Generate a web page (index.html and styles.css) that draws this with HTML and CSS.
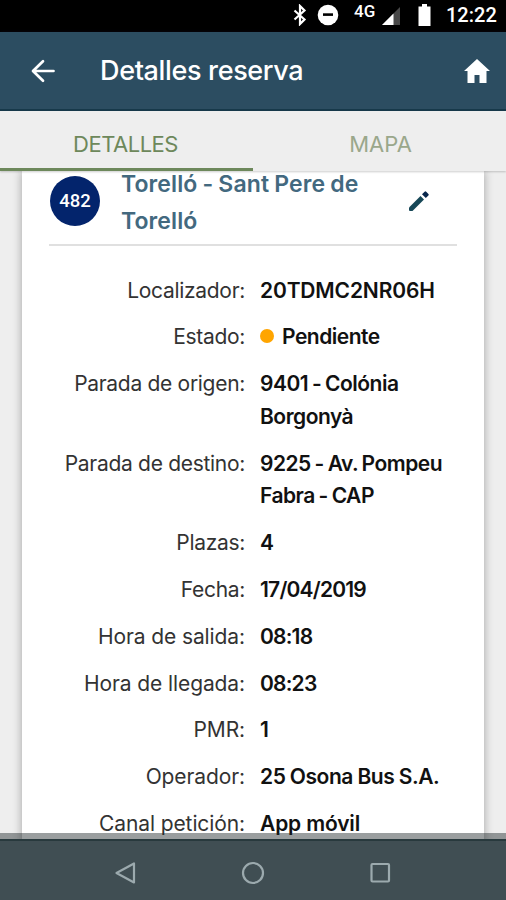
FILE: index.html
```html
<!DOCTYPE html>
<html lang="es">
<head>
<meta charset="utf-8">
<title>Detalles reserva</title>
<link rel="stylesheet" href="styles.css">
</head>
<body>
<div class="phone">
  <div class="status">
    <svg class="bt" width="14" height="22" viewBox="0 0 14 22" fill="none" stroke="#fff" stroke-width="2.200"><path d="M1.500 6.500 11.500 15.500 7 20V2l4.500 4.500L1.500 15.500"/></svg>
    <svg class="dnd" width="22" height="22" viewBox="0 0 22 22"><circle cx="11" cy="11" r="10.300" fill="#fff"/><path d="M6 10.600h10" stroke="#000" stroke-width="2.600"/></svg>
    <span class="net">4G</span>
    <svg class="sig" width="18" height="18" viewBox="0 0 18 18"><path d="M18 0v18H0z" fill="#484848"/><path d="M11.500 6.500V18H0z" fill="#fff"/></svg>
    <svg class="bat" width="13" height="22" viewBox="0 0 13 22"><path d="M4 0h5v2.500h3.500V22H.5V2.500H4z" fill="#fff"/></svg>
    <span class="clock">12:22</span>
  </div>
  <header class="bar">
    <svg class="back" width="24" height="24" viewBox="0 0 24 24" fill="none" stroke="#fff" stroke-width="2.700" stroke-linecap="round" stroke-linejoin="round"><path d="M12 2.200 2 12l10 9.800M2.500 12H22.500"/></svg>
    <h1>Detalles reserva</h1>
    <svg class="home" width="26" height="24" viewBox="0 0 26 24"><path d="M13 0 26 12h-3.500v12h-7v-8h-5v8h-7V12H0z" fill="#fff"/></svg>
  </header>
  <nav class="tabs"><span class="tab active">DETALLES</span><span class="tab">MAPA</span></nav>
  <main>
    <section class="card">
      <div class="route">
        <span class="line">482</span>
        <h2>Torelló - Sant Pere de<br>Torelló</h2>
        <svg class="edit" width="22" height="22" viewBox="0 0 22 22" fill="#164757"><path d="M1 17.500 12.500 6l3.500 3.500L4.500 21H2q-1 0-1-1z"/><path d="m14 4.300 2.600-2.600q.8-.8 1.600 0l2.200 2.200q.8.800 0 1.600L17.800 8z" fill="#08264c"/></svg>
      </div>
      <dl>
        <dt>Localizador:</dt><dd class="code">20TDMC2NR06H</dd>
        <dt>Estado:</dt><dd><i class="dot"></i>Pendiente</dd>
        <dt>Parada de origen:</dt><dd>9401 - Colónia<br>Borgonyà</dd>
        <dt>Parada de destino:</dt><dd>9225 - Av. Pompeu<br>Fabra - CAP</dd>
        <dt>Plazas:</dt><dd>4</dd>
        <dt>Fecha:</dt><dd class="num">17/04/2019</dd>
        <dt class="wide">Hora de salida:</dt><dd class="num">08:18</dd>
        <dt class="wide">Hora de llegada:</dt><dd class="num">08:23</dd>
        <dt class="wide">PMR:</dt><dd>1</dd>
        <dt class="wide">Operador:</dt><dd class="operator">25 Osona Bus S.A.</dd>
        <dt class="wide">Canal petición:</dt><dd class="code">App móvil</dd>
      </dl>
    </section>
  </main>
  <footer class="nav">
    <svg width="22" height="22" viewBox="0 0 22 22"><path d="M2.500 11 20 1.500v19z"/></svg>
    <svg width="24" height="24" viewBox="0 0 24 24"><circle cx="12" cy="12" r="10"/></svg>
    <svg width="22" height="22" viewBox="0 0 22 22"><rect x="2.500" y="2" width="17.500" height="17.500" rx="1"/></svg>
  </footer>
</div>
</body>
</html>
```
FILE: styles.css
```css
* { box-sizing: border-box; }
body { margin: 0; font-family: Inter, "Liberation Sans", sans-serif; }
.phone { width: 506px; height: 900px; display: flex; flex-direction: column; overflow: hidden; background: #eee; }
.status { height: 32px; flex: none; background: #000; color: #fff; display: flex; padding-left: 293px; align-items: flex-start; font-family: Roboto, sans-serif; }
.bt { margin-top: 4px; }
.dnd { margin: 4px 0 0 10px; }
.net { font-size: 17px; line-height: 20px; font-weight: 500; margin: 1px 0 0 15px; width: 22px; }
.sig { margin: 7px 0 0 6px; }
.bat { margin: 4px 0 0 18px; }
.clock { font-size: 20px; line-height: 24px; font-weight: 500; margin: 3px 0 0 15px; }
.bar { height: 79px; flex: none; background: #2c4d61; border-bottom: 2px solid #17394a; color: #fff; display: flex; align-items: center; padding: 0 16px 0 31px; z-index: 1; box-shadow: 0 1px 4px rgba(60, 40, 100, .3); }
.back { margin-top: 1px; }
.bar h1 { margin: 1px auto 0 45px; font-size: 27px; font-weight: 450; letter-spacing: -.35px; line-height: 40px; }
.home { margin-top: 1px; }
.tabs { height: 60px; flex: none; display: grid; grid-template-columns: 253px 253px; background: #eee; z-index: 1; color: #9aa78b; font-size: 22px; text-align: center; line-height: 66px; box-shadow: 0 1px 2px rgba(0, 0, 0, .2); }
.tab { height: 60px; padding-left: 2px; }
.tab.active { color: #6d885b; border-bottom: 3px solid #6d885b; padding: 0 2px 0 0; letter-spacing: -.5px; }
main { flex: 1; min-height: 0; overflow: hidden; padding: 0 22px; }
.card { background: #fff; height: 700px; padding: 0 27px; box-shadow: 0 0 9px rgba(0, 0, 0, .32); }
.route { height: 75px; border-bottom: 2px solid #e0e0e0; display: flex; }
.line { width: 50px; height: 50px; margin: 5px 0 0 1px; border-radius: 50%; background: #03246c; color: #fff; font: 500 18.500px/50px Roboto, sans-serif; text-align: center; }
.route h2 { margin: -5px 0 0 21px; width: 287px; font-size: 23px; line-height: 37px; font-weight: 600; letter-spacing: .1px; word-spacing: -.8px; color: #43697f; white-space: nowrap; }
.edit { margin-top: 19px; }
dl { margin: 28.500px 0 0; display: grid; grid-template-columns: 196px 1fr; column-gap: 15px; row-gap: 14px; font-size: 21px; line-height: 32.800px; color: #1b1b1b; }
dt { text-align: right; white-space: nowrap; color: #333; letter-spacing: -.3px; }
dt.wide { letter-spacing: -.1px; }
dd { margin: 0; font-weight: 600; white-space: nowrap; color: #111; letter-spacing: -.5px; word-spacing: -1px; }
dd.code { letter-spacing: -.15px; word-spacing: 0; }
dd.operator { letter-spacing: -.45px; word-spacing: -.4px; }
dd.num { letter-spacing: -.8px; }
.dot { display: inline-block; width: 14px; height: 14px; border-radius: 50%; background: #ffa500; margin-right: 8px; position: relative; top: -1px; }
.nav { height: 67px; flex: none; z-index: 1; margin-top: -6px; border-top: 6px solid rgba(30, 40, 42, .45); background: #404e53; background-clip: padding-box; display: flex; align-items: center; justify-content: space-between; padding: 6px 115px 0 114px; box-shadow: inset 0 2px #28393d; }
.nav svg { fill: none; stroke: #9caaae; stroke-width: 2.200; stroke-linejoin: round; }
```
